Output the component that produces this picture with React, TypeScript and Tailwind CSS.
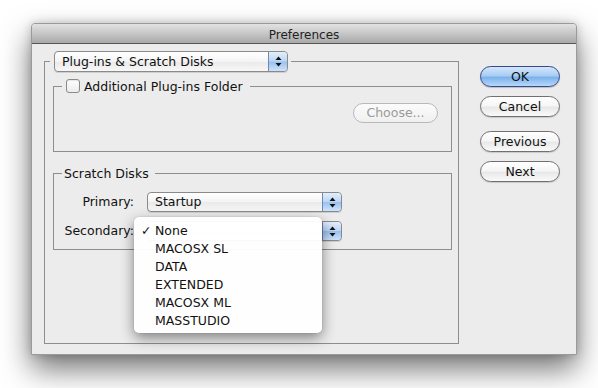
import React from "react";

const popupBody =
  "bg-[linear-gradient(#ffffff,#f4f4f4_50%,#e9e9e9_51%,#f7f7f7)] border border-[#8a8a8a] rounded-[4px] shadow-[0_1px_0_rgba(0,0,0,0.12)]";
const arrowPart =
  "bg-[linear-gradient(#e3eefb,#bcd6f4_48%,#98c1f0_52%,#cfe3fa)] border-l border-[#6f86b8]";

function Arrows() {
  return (
    <svg width="7" height="11" viewBox="0 0 7 11">
      <path d="M3.5 0.5 L6.5 4 L0.5 4 Z" fill="#111" />
      <path d="M3.5 10.5 L6.5 7 L0.5 7 Z" fill="#111" />
    </svg>
  );
}

function Popup({ label, w, h }: { label: string; w: string; h: string }) {
  return (
    <div className={`${w} ${h} ${popupBody} flex items-stretch overflow-hidden`}>
      <div className="flex-1 flex items-center pl-[7px] pt-px text-[#111] whitespace-nowrap">{label}</div>
      <div className={`w-[20px] ${arrowPart} flex items-center justify-center rounded-r-[3px] border-y border-r border-y-[#5d74a8] border-r-[#4f66a0] -my-px -mr-px`}>
        <Arrows />
      </div>
    </div>
  );
}

function PillButton({ label, primary }: { label: string; primary?: boolean }) {
  return (
    <div
      className={
        primary
          ? "w-[80px] h-[21px] pt-px rounded-full border border-[#36478a] bg-[linear-gradient(#d3e6fb,#a9cdf4_45%,#7cb2ec_55%,#b5d8fa)] flex items-center justify-center text-[#111] shadow-[0_1px_1px_rgba(0,0,0,0.2)]"
          : "w-[80px] h-[21px] pt-px rounded-full border border-[#707070] bg-[linear-gradient(#ffffff,#f6f6f6_45%,#e8e8e8_55%,#fafafa)] flex items-center justify-center text-[#111] shadow-[0_1px_1px_rgba(0,0,0,0.15)]"
      }
    >
      {label}
    </div>
  );
}

export default function App() {
  const items = ["MACOSX SL", "DATA", "EXTENDED", "MACOSX ML", "MASSTUDIO"];
  return (
    <div className="w-[598px] h-[388px] bg-white pt-[23px] pl-[31px] font-['DejaVu_Sans',sans-serif] text-[12.5px] leading-none text-[#111] overflow-hidden">
      <div className="w-[546px] h-[332px] border border-[#9a9a9a] rounded-t-[4px] bg-[#ececec] shadow-[0_14px_30px_rgba(0,0,0,0.55),0_0_10px_rgba(0,0,0,0.18)] flex flex-col">
        <div className="h-[20px] pt-[2px] border-b border-[#565656] rounded-t-[3px] bg-[linear-gradient(#e2e2e2,#c6c6c6_50%,#a9a9a9)] flex items-center justify-center text-[12px] text-[#222]">
          Preferences
        </div>
        <div className="flex pt-[7px] pl-[12px]">
          <fieldset className="w-[415px] border border-[#8e8e8e] m-0 p-0">
            <legend className="ml-[5px] pl-[4px] pr-[3px]">
              <Popup label="Plug-ins & Scratch Disks" w="w-[234px]" h="h-[21px]" />
            </legend>
            <div className="h-[271px] pt-[7px] pl-[8px] pr-[6px]">
              <fieldset className="w-[399px] border border-[#8e8e8e] m-0 p-0">
                <legend className="ml-[8px] pl-[4px] pr-[7px] h-[14px] flex items-center gap-[4px]">
                  <span className="w-[14px] h-[14px] rounded-[3px] border border-[#8a8a8a] bg-[linear-gradient(#ffffff,#ececec)] shadow-[inset_0_1px_1px_rgba(0,0,0,0.1)]" />
                  <span className="leading-[14px] pt-px">Additional Plug-ins Folder</span>
                </legend>
                <div className="h-[58px] flex justify-end items-start pt-[10px] pr-[13px]">
                  <div className="w-[85px] h-[20px] pt-px rounded-full border border-[#b9b9b9] bg-[linear-gradient(#fbfbfb,#f0f0f0)] flex items-center justify-center text-[#9a9a9a]">
                    Choose...
                  </div>
                </div>
              </fieldset>
              <fieldset className="mt-[13px] w-[399px] border border-[#8e8e8e] m-0 p-0">
                <legend className="ml-[8px] pl-[2px] pr-[6px] h-[16px] leading-[17px]">Scratch Disks</legend>
                <div className="h-[68px] pt-[11px] pb-[8px] flex flex-col gap-[9px]">
                  <div className="flex items-center">
                    <div className="w-[80px] text-right pt-px">Primary:</div>
                    <div className="ml-[13px]">
                      <Popup label="Startup" w="w-[195px]" h="h-[20px]" />
                    </div>
                  </div>
                  <div className="relative flex items-center">
                    <div className="w-[80px] text-right pt-px">Secondary:</div>
                    <div className="ml-[13px]">
                      <Popup label="None" w="w-[195px]" h="h-[20px]" />
                    </div>
                    <div className="absolute left-[80px] top-[-4px] w-[188px] h-[116px] bg-white/95 rounded-[5px] shadow-[0_5px_14px_rgba(0,0,0,0.45),0_0_1px_rgba(0,0,0,0.35)] pt-[5px] pb-[3px] z-10">
                      <div className="h-[18px] flex items-center">
                        <span className="w-[21px] pl-[7px]">✓</span>
                        <span>None</span>
                      </div>
                      {items.map((it) => (
                        <div key={it} className="h-[18px] flex items-center pl-[21px]">
                          {it}
                        </div>
                      ))}
                    </div>
                  </div>
                </div>
              </fieldset>
            </div>
          </fieldset>
          <div className="ml-[21px] mt-[15px] flex flex-col">
            <PillButton label="OK" primary />
            <div className="mt-[9px]">
              <PillButton label="Cancel" />
            </div>
            <div className="mt-[14px]">
              <PillButton label="Previous" />
            </div>
            <div className="mt-[9px]">
              <PillButton label="Next" />
            </div>
          </div>
        </div>
      </div>
    </div>
  );
}
